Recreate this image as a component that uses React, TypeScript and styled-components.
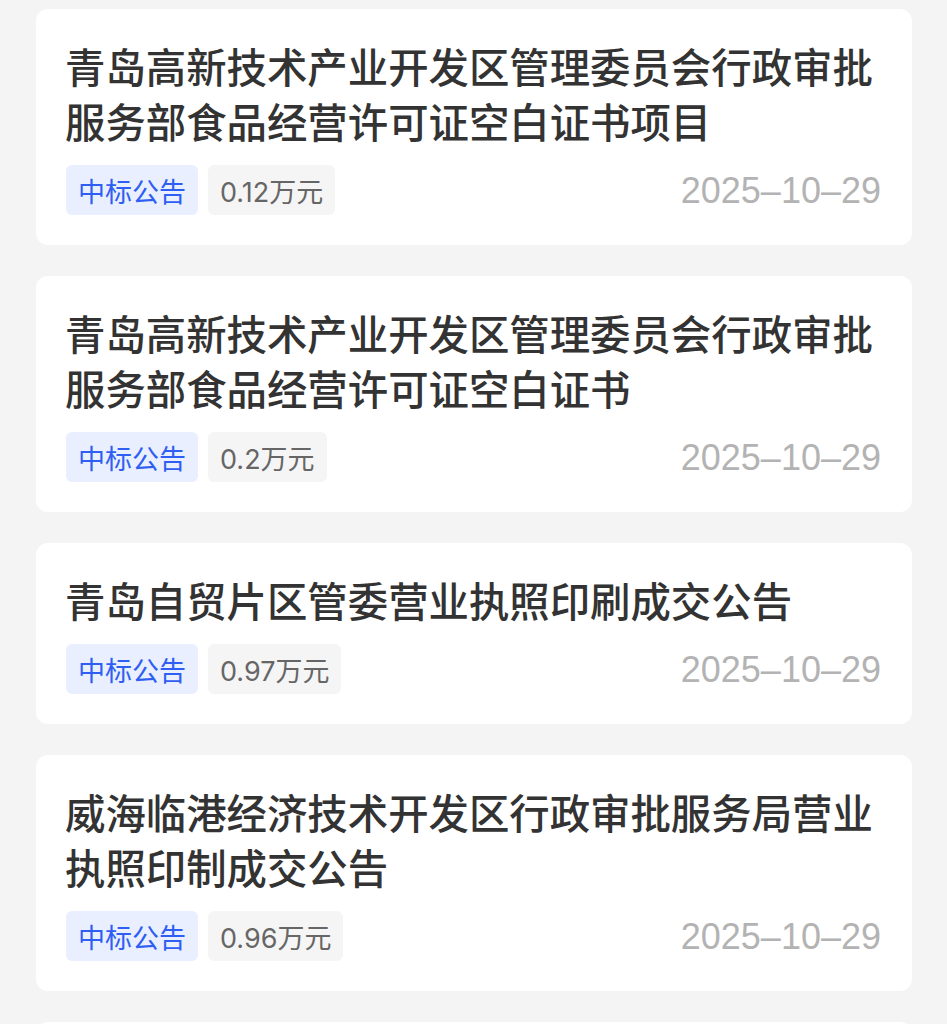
import React from "react";
import styled, { createGlobalStyle } from "styled-components";

interface INotice {
  title: string;
  type: string;
  amount: string;
  date: string;
}

const notices: INotice[] = [
  {
    title: "青岛高新技术产业开发区管理委员会行政审批服务部食品经营许可证空白证书项目",
    type: "中标公告",
    amount: "0.12万元",
    date: "2025–10–29",
  },
  {
    title: "青岛高新技术产业开发区管理委员会行政审批服务部食品经营许可证空白证书",
    type: "中标公告",
    amount: "0.2万元",
    date: "2025–10–29",
  },
  {
    title: "青岛自贸片区管委营业执照印刷成交公告",
    type: "中标公告",
    amount: "0.97万元",
    date: "2025–10–29",
  },
  {
    title: "威海临港经济技术开发区行政审批服务局营业执照印制成交公告",
    type: "中标公告",
    amount: "0.96万元",
    date: "2025–10–29",
  },
  {
    title: "青岛市市场监督管理局营业执照印制项目",
    type: "中标公告",
    amount: "1.2万元",
    date: "2025–10–28",
  },
];

const GlobalStyle = createGlobalStyle`
  html, body {
    margin: 0;
    padding: 0;
    background-color: #f4f4f4;
    font-family: "Noto Sans CJK SC", "Noto Sans", sans-serif;
  }
`;

const Page = styled.div`
  display: flex;
  flex-direction: column;
  gap: 31px;
  padding: 9px 35px 0 36px;
`;

const Card = styled.div`
  background-color: #fff;
  border-radius: 12px;
  padding: 29px 31px 30px 29px;
`;

const Title = styled.div`
  font-size: 40.4px;
  line-height: 55px;
  font-weight: 500;
  color: #333;
  margin-bottom: 17px;
`;

const Footer = styled.div`
  display: flex;
  align-items: center;
  justify-content: space-between;
  padding-left: 1px;
`;

const Tags = styled.div`
  display: flex;
  gap: 10px;
`;

const Tag = styled.span<{ primary?: boolean }>`
  height: 50px;
  display: flex;
  align-items: center;
  padding: 0 12px;
  border-radius: 6px;
  font-family: "Inter", "Noto Sans CJK SC", sans-serif;
  font-size: 27px;
  background-color: ${(props) => (props.primary ? "#e9efff" : "#f5f5f5")};
  color: ${(props) => (props.primary ? "#2f5ef3" : "#666")};
`;

const DateText = styled.span`
  font-family: "Liberation Sans", "Noto Sans", sans-serif;
  font-size: 36px;
  color: #b3b3b3;
  margin-top: 2px;
`;

const App: React.FC = () => {
  return (
    <>
      <GlobalStyle />
      <Page>
        {notices.map((notice, idx) => (
          <Card key={idx}>
            <Title>{notice.title}</Title>
            <Footer>
              <Tags>
                <Tag primary>{notice.type}</Tag>
                <Tag>{notice.amount}</Tag>
              </Tags>
              <DateText>{notice.date}</DateText>
            </Footer>
          </Card>
        ))}
      </Page>
    </>
  );
};

export default App;
